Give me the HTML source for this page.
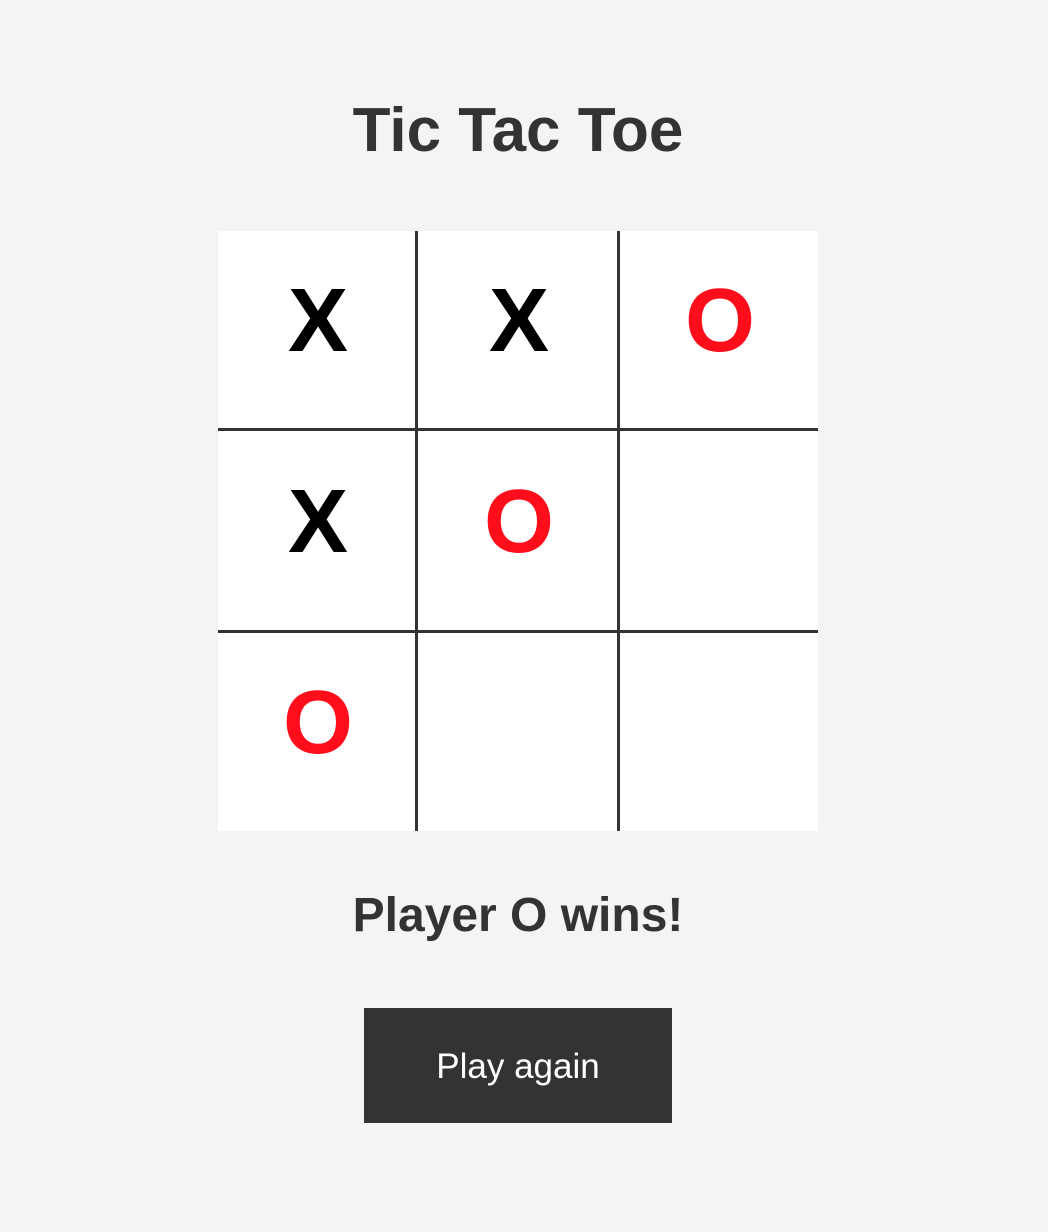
<!DOCTYPE html>
<html><head><meta charset="utf-8">
<style>
html,body{margin:0;padding:0;background:#f4f4f4;width:1048px;height:1232px;overflow:hidden;font-family:"Liberation Sans",Arial,sans-serif;}
h1{position:absolute;left:0;width:1036px;top:94px;margin:0;text-align:center;font-size:62px;line-height:74px;font-weight:bold;color:#333;}
.board{position:absolute;left:218px;top:231px;width:600px;height:600px;background:#fff;}
.v,.h{position:absolute;background:#333;}
.v{width:3px;height:600px;top:0;}
.h{height:3px;width:600px;left:0;}
.c{position:absolute;width:200px;height:200px;text-align:center;font-weight:bold;font-size:90px;line-height:180px;}
.x{color:#000;}
.o{color:#ff0d1b;}
.msg{position:absolute;left:0;width:1036px;top:887px;text-align:center;font-size:48px;line-height:58px;font-weight:bold;color:#333;}
.btn{position:absolute;left:364px;top:1008px;width:308px;height:115px;background:#333;color:#fff;font-size:35px;line-height:117px;text-align:center;}
</style></head><body>
<h1>Tic Tac Toe</h1>
<div class="board">
<div class="c x" style="left:0;top:0">X</div>
<div class="c x" style="left:201px;top:0">X</div>
<div class="c o" style="left:402px;top:0">O</div>
<div class="c x" style="left:0;top:201px">X</div>
<div class="c o" style="left:201px;top:201px">O</div>
<div class="c o" style="left:0;top:402px">O</div>
<div class="v" style="left:197px"></div>
<div class="v" style="left:399px"></div>
<div class="h" style="top:197px"></div>
<div class="h" style="top:399px"></div>
</div>
<div class="msg">Player O wins!</div>
<div class="btn">Play again</div>
</body></html>
